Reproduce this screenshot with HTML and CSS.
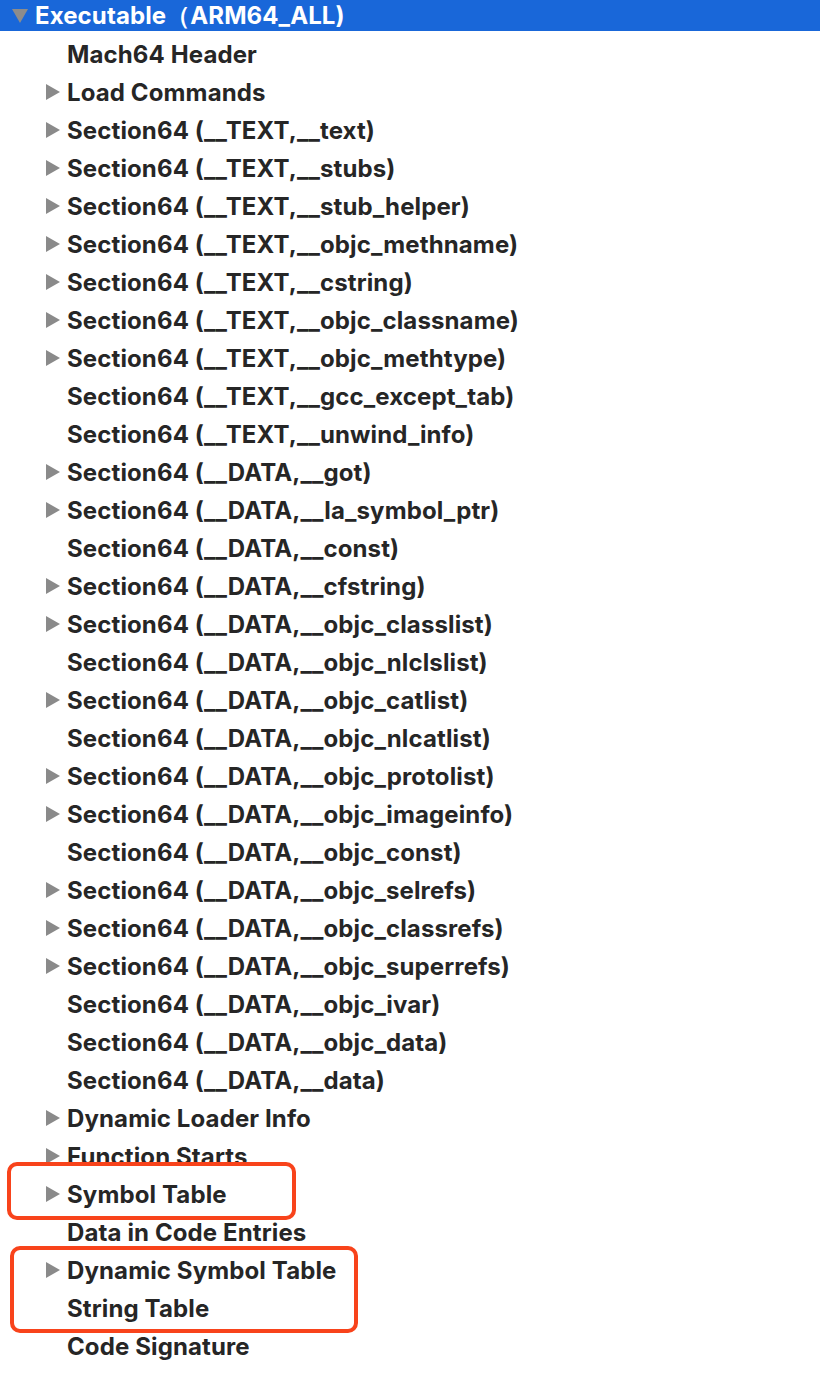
FILE: index.html
```html
<!DOCTYPE html>
<html lang="en">
<head>
    <meta charset="UTF-8">
    <meta name="viewport" content="width=device-width, initial-scale=1.0">
    <title>Executable</title>
    <link rel="stylesheet" href="styles.css">
</head>
<body>
    <div class="tree">
        <div class="root">
            <span class="arrow down"></span>
            <span class="label">Executable（ARM64_ALL)</span>
        </div>
        <div class="row"><span class="arrow none"></span>Mach64 Header</div>
        <div class="row"><span class="arrow"></span>Load Commands</div>
        <div class="row"><span class="arrow"></span>Section64 (__TEXT,__text)</div>
        <div class="row"><span class="arrow"></span>Section64 (__TEXT,__stubs)</div>
        <div class="row"><span class="arrow"></span>Section64 (__TEXT,__stub_helper)</div>
        <div class="row"><span class="arrow"></span>Section64 (__TEXT,__objc_methname)</div>
        <div class="row"><span class="arrow"></span>Section64 (__TEXT,__cstring)</div>
        <div class="row"><span class="arrow"></span>Section64 (__TEXT,__objc_classname)</div>
        <div class="row"><span class="arrow"></span>Section64 (__TEXT,__objc_methtype)</div>
        <div class="row"><span class="arrow none"></span>Section64 (__TEXT,__gcc_except_tab)</div>
        <div class="row"><span class="arrow none"></span>Section64 (__TEXT,__unwind_info)</div>
        <div class="row"><span class="arrow"></span>Section64 (__DATA,__got)</div>
        <div class="row"><span class="arrow"></span>Section64 (__DATA,__la_symbol_ptr)</div>
        <div class="row"><span class="arrow none"></span>Section64 (__DATA,__const)</div>
        <div class="row"><span class="arrow"></span>Section64 (__DATA,__cfstring)</div>
        <div class="row"><span class="arrow"></span>Section64 (__DATA,__objc_classlist)</div>
        <div class="row"><span class="arrow none"></span>Section64 (__DATA,__objc_nlclslist)</div>
        <div class="row"><span class="arrow"></span>Section64 (__DATA,__objc_catlist)</div>
        <div class="row"><span class="arrow none"></span>Section64 (__DATA,__objc_nlcatlist)</div>
        <div class="row"><span class="arrow"></span>Section64 (__DATA,__objc_protolist)</div>
        <div class="row"><span class="arrow"></span>Section64 (__DATA,__objc_imageinfo)</div>
        <div class="row"><span class="arrow none"></span>Section64 (__DATA,__objc_const)</div>
        <div class="row"><span class="arrow"></span>Section64 (__DATA,__objc_selrefs)</div>
        <div class="row"><span class="arrow"></span>Section64 (__DATA,__objc_classrefs)</div>
        <div class="row"><span class="arrow"></span>Section64 (__DATA,__objc_superrefs)</div>
        <div class="row"><span class="arrow none"></span>Section64 (__DATA,__objc_ivar)</div>
        <div class="row"><span class="arrow none"></span>Section64 (__DATA,__objc_data)</div>
        <div class="row"><span class="arrow none"></span>Section64 (__DATA,__data)</div>
        <div class="row"><span class="arrow"></span>Dynamic Loader Info</div>
        <div class="row"><span class="arrow"></span>Function Starts</div>
        <div class="row"><span class="arrow"></span>Symbol Table</div>
        <div class="row"><span class="arrow none"></span>Data in Code Entries</div>
        <div class="row"><span class="arrow"></span>Dynamic Symbol Table</div>
        <div class="row"><span class="arrow none"></span>String Table</div>
        <div class="row"><span class="arrow none"></span>Code Signature</div>

        <!-- annotation boxes drawn over the list -->
        <div class="mark mark-symtab"></div>
        <div class="mark mark-dysym"></div>
    </div>
</body>
</html>
```

FILE: styles.css
```css
body {
    margin: 0;
    background: #ffffff;
    font-family: Inter, "Liberation Sans", sans-serif;
}
.tree {
    position: relative;
    height: 1394px;
}
.root {
    display: flex;
    align-items: center;
    height: 31px;
    margin-bottom: 4px;
    padding-left: 12px;
    background: #1967d9;
    color: #ffffff;
    font-size: 24px;
    font-weight: 700;
    letter-spacing: 0.1px;
}
.root .label {
    margin-left: 7px;
}
.row {
    display: flex;
    align-items: center;
    height: 38px;
    padding-left: 46px;
    color: #262626;
    font-size: 24px;
    font-weight: 700;
    letter-spacing: 0.12px;
}
.arrow {
    width: 0;
    height: 0;
    margin-right: 7px;
    border-top: 8px solid transparent;
    border-bottom: 8px solid transparent;
    border-left: 14px solid #8a8a8a;
}
.arrow.none {
    border-left-color: transparent;
}
.arrow.down {
    margin-right: 0;
    border-left: 8px solid transparent;
    border-right: 8px solid transparent;
    border-top: 14px solid #8c8c8c;
    border-bottom: 0;
}
.mark {
    position: absolute;
    border: 4px solid #f8431b;
    border-radius: 10px;
}
.mark-symtab {
    left: 7px;
    top: 1162px;
    width: 281px;
    height: 50px;
}
.mark-dysym {
    left: 10px;
    top: 1246px;
    width: 340px;
    height: 79px;
}
```
